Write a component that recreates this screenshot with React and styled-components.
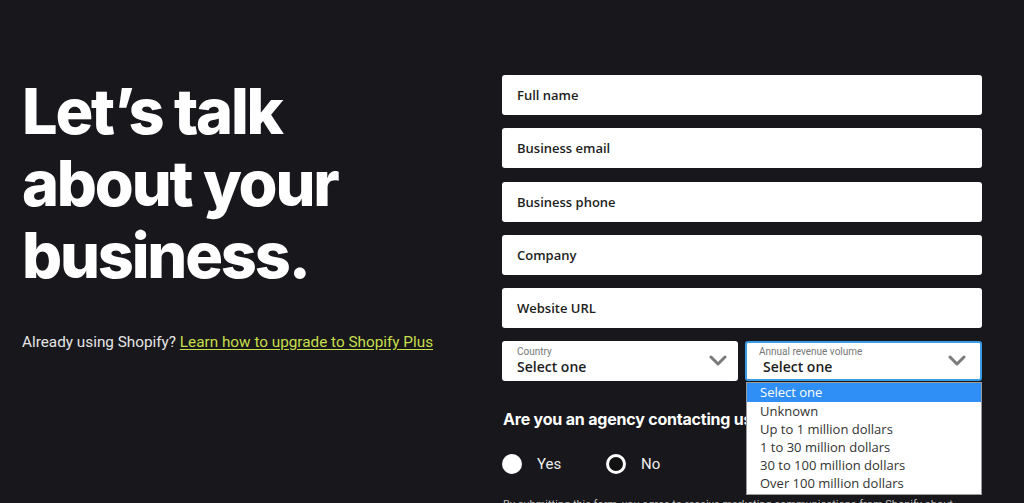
import React from "react";
import styled, { createGlobalStyle } from "styled-components";

const Global = createGlobalStyle`
  html, body { margin: 0; padding: 0; background: #18171c; }
  body { font-family: "Inter", "Liberation Sans", sans-serif; overflow: hidden; }
  * { box-sizing: border-box; }
`;

const Page = styled.div`
  display: flex;
  padding: 75px 0 0 22px;
  color: #fff;
`;

const Intro = styled.section`
  width: 480px;
  display: flex;
  flex-direction: column;
`;

const Heading = styled.h1`
  margin: 0;
  font-family: "Inter", sans-serif;
  font-weight: 800;
  font-size: 63px;
  line-height: 72px;
  letter-spacing: -2.2px;
  color: #fff;
`;

const Lead = styled.p`
  margin: 42px 0 0;
  font-family: "Roboto", sans-serif;
  font-size: 15.3px;
  color: #e6e6e6;
`;

const Link = styled.a`
  color: #c6df4a;
  text-decoration: underline;
  text-underline-offset: 2px;
`;

const Form = styled.form`
  width: 480px;
  display: flex;
  flex-direction: column;
  gap: 13.3px;
`;

const Field = styled.div`
  flex-shrink: 0;
  height: 40px;
  background: #fff;
  border-radius: 3px;
  display: flex;
  align-items: center;
  padding-left: 15px;
  font-family: "Open Sans", sans-serif;
  font-weight: 600;
  font-size: 13px;
  color: #1e1e1e;
`;

const SelectRow = styled.div`
  display: grid;
  grid-template-columns: 236px 237px;
  gap: 7px;
`;

const SelectWrap = styled.div`
  position: relative;
`;

const SelectBox = styled.div`
  height: 40px;
  background: #fff;
  border-radius: 3px;
  position: relative;
  border: ${(p) => (p.$focused ? "2px solid #3a9be6" : "none")};
  padding: ${(p) => (p.$focused ? "3px 0 0 12px" : "5px 0 0 15px")};
  font-family: "Open Sans", sans-serif;
  color: #1e1e1e;
`;

const SmallLabel = styled.div`
  font-size: 10px;
  line-height: 12px;
  color: #777;
  font-family: "Roboto", sans-serif;
`;

const Value = styled.div`
  font-size: 14px;
  line-height: 18px;
  font-weight: 600;
  padding-left: ${(p) => (p.$shift ? "4px" : "0")};
`;

const Chevron = styled.svg`
  position: absolute;
  right: ${(p) => (p.$focused ? "14px" : "11px")};
  top: 50%;
  transform: translateY(-50%);
`;

const Dropdown = styled.ul`
  position: absolute;
  left: 1px;
  top: 41px;
  width: 236px;
  margin: 0;
  padding: 0 0 1px;
  list-style: none;
  background: #fff;
  border: 1px solid #9a9a9a;
  z-index: 2;
  font-family: "Open Sans", sans-serif;
  font-size: 13px;
`;

const Option = styled.li`
  height: 18.2px;
  line-height: 18px;
  padding-left: 13px;
  color: ${(p) => (p.$active ? "#fff" : "#333")};
  background: ${(p) => (p.$active ? "#2f8ff7" : "transparent")};
`;

const Question = styled.h3`
  margin: 14px 0 0 1px;
  font-family: "Inter", sans-serif;
  font-weight: 700;
  font-size: 16px;
  letter-spacing: -0.2px;
  color: #fff;
  white-space: nowrap;
`;

const Radios = styled.div`
  display: flex;
  align-items: center;
  margin-top: 25px;
`;

const RadioOption = styled.label`
  display: flex;
  align-items: center;
  gap: 15px;
  width: 104px;
  font-family: "Roboto", sans-serif;
  font-size: 15px;
  color: #eee;
`;

const Dot = styled.span`
  width: 20px;
  height: 20px;
  border-radius: 50%;
  background: ${(p) => (p.$checked ? "#111" : "#fff")};
  border: ${(p) => (p.$checked ? "3px solid #fff" : "none")};
`;

const Fine = styled.p`
  margin: 23px 0 0 1px;
  font-family: "Roboto", sans-serif;
  font-size: 11px;
  line-height: 16px;
  color: #bbb;
`;

const ChevronIcon = ({ focused }) => (
  <Chevron $focused={focused} width="18" height="12" viewBox="0 0 18 12">
    <path d="M2 2 L9 9 L16 2" fill="none" stroke="#7a7a7a" strokeWidth="3" strokeLinecap="round" strokeLinejoin="round" />
  </Chevron>
);

const options = [
  "Select one",
  "Unknown",
  "Up to 1 million dollars",
  "1 to 30 million dollars",
  "30 to 100 million dollars",
  "Over 100 million dollars",
];

export default function App() {
  return (
    <>
      <Global />
      <Page>
        <Intro>
          <Heading>
            Let’s talk
            <br />
            about your
            <br />
            business.
          </Heading>
          <Lead>
            Already using Shopify? <Link href="#">Learn how to upgrade to Shopify Plus</Link>
          </Lead>
        </Intro>
        <Form>
          <Field>Full name</Field>
          <Field>Business email</Field>
          <Field>Business phone</Field>
          <Field>Company</Field>
          <Field>Website URL</Field>
          <SelectRow>
            <SelectWrap>
              <SelectBox>
                <SmallLabel>Country</SmallLabel>
                <Value>Select one</Value>
                <ChevronIcon />
              </SelectBox>
            </SelectWrap>
            <SelectWrap>
              <SelectBox $focused>
                <SmallLabel>Annual revenue volume</SmallLabel>
                <Value $shift>Select one</Value>
                <ChevronIcon focused />
              </SelectBox>
              <Dropdown>
                {options.map((o, i) => (
                  <Option key={o} $active={i === 0}>{o}</Option>
                ))}
              </Dropdown>
            </SelectWrap>
          </SelectRow>
          <div>
            <Question>Are you an agency contacting us on behalf of a client?</Question>
            <Radios>
              <RadioOption><Dot />Yes</RadioOption>
              <RadioOption><Dot $checked />No</RadioOption>
            </Radios>
            <Fine>By submitting this form, you agree to receive marketing communications from Shopify about Shopify products and services.</Fine>
          </div>
        </Form>
      </Page>
    </>
  );
}
